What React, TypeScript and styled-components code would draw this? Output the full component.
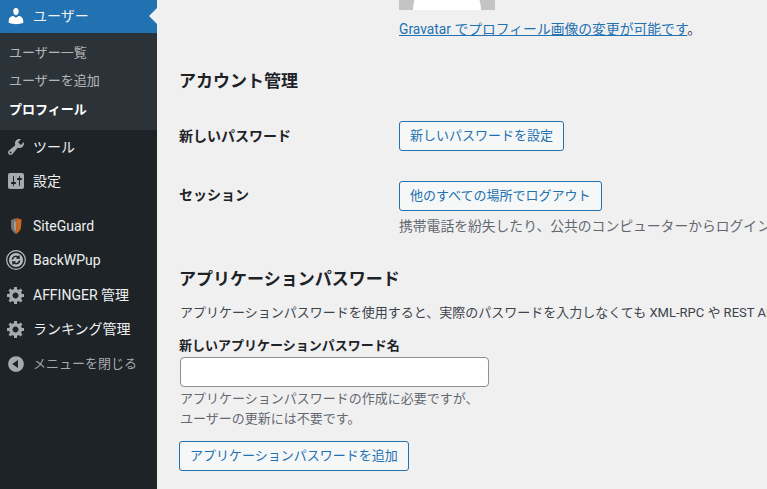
import React from "react";
import styled, { createGlobalStyle } from "styled-components";

const GlobalStyle = createGlobalStyle`
  html, body {
    margin: 0;
    padding: 0;
    height: 100%;
    overflow: hidden;
    background: #f0f0f1;
  }
  * {
    box-sizing: border-box;
  }
`;

const Page = styled.div`
  display: flex;
  width: 767px;
  height: 489px;
  overflow: hidden;
  font-family: Roboto, "Noto Sans CJK JP", sans-serif;
  font-size: 13px;
  color: #3c434a;
`;

const Sidebar = styled.nav`
  width: 157px;
  flex-shrink: 0;
  background: #1d2327;
`;

const MenuItem = styled.div<{ $current?: boolean; $muted?: boolean; $gap?: boolean }>`
  position: relative;
  display: flex;
  align-items: center;
  gap: 7px;
  height: ${(p) => (p.$current ? 33 : 34.4)}px;
  margin-top: ${(p) => (p.$gap ? 10.4 : 0)}px;
  padding-left: 6px;
  padding-bottom: ${(p) => (p.$current ? 2 : 0)}px;
  font-size: ${(p) => (p.$muted ? 13 : 14)}px;
  color: ${(p) => (p.$muted ? "#a7aaad" : "#f0f0f1")};
  background: ${(p) => (p.$current ? "#2271b1" : "transparent")};

  svg {
    flex-shrink: 0;
    fill: ${(p) => (p.$current ? "#fff" : "#a7aaad")};
  }
`;

const MenuLabel = styled.span`
  line-height: 20px;
`;

const CurrentArrow = styled.span`
  position: absolute;
  right: 0;
  top: 8px;
  border: 8px solid transparent;
  border-right-color: #f0f0f1;
  border-left-width: 0;
`;

const SubMenu = styled.div`
  height: 96.6px;
  padding-top: 5.6px;
  background: #2c3338;
`;

const SubItem = styled.div<{ $active?: boolean }>`
  height: 28.5px;
  line-height: 28px;
  padding-left: 9px;
  font-size: 13px;
  font-weight: ${(p) => (p.$active ? 700 : 400)};
  color: ${(p) => (p.$active ? "#fff" : "rgba(240, 240, 241, 0.7)")};
`;

const Content = styled.main`
  flex: 1;
  min-width: 0;
  padding-left: 22px;
`;

const ValueColumn = styled.div`
  margin-left: 220px;
`;

const Avatar = styled.div`
  position: relative;
  width: 96px;
  height: 10px;
  overflow: hidden;
  background: #c4c4c4;
`;

const AvatarBody = styled.span`
  position: absolute;
  left: 14px;
  top: -24px;
  width: 68px;
  height: 68px;
  border-radius: 50%;
  background: #fff;
`;

const GravatarNote = styled.p`
  margin: 9px 0 0;
  font-size: 13.8px;
  line-height: 20px;
  white-space: nowrap;

  a {
    color: #2271b1;
    text-decoration: underline;
  }
`;

const Heading = styled.h2<{ $top: number }>`
  margin: ${(p) => p.$top}px 0 0;
  font-size: 17px;
  line-height: 24px;
  font-weight: 700;
  color: #1d2327;
`;

const FormRow = styled.div<{ $top: number }>`
  display: grid;
  grid-template-columns: 220px 1fr;
  justify-items: start;
  margin-top: ${(p) => p.$top}px;
`;

const RowLabel = styled.div<{ $pad: number }>`
  padding-top: ${(p) => p.$pad}px;
  font-size: 14px;
  line-height: 20px;
  font-weight: 700;
  color: #1d2327;
`;

const Button = styled.button`
  display: block;
  height: 30px;
  padding: 0 10px;
  border: 1px solid #2271b1;
  border-radius: 3px;
  background: #f6f7f7;
  color: #2271b1;
  font-family: inherit;
  font-size: 13px;
  line-height: 28px;
  white-space: nowrap;
`;

const Description = styled.p`
  margin: 5px 0 0;
  font-size: 13.8px;
  line-height: 20px;
  color: #646970;
  white-space: nowrap;
`;

const Intro = styled.p`
  margin: 12px 0 0 1px;
  font-size: 13px;
  line-height: 20px;
  white-space: nowrap;
`;

const FieldLabel = styled.label`
  display: block;
  margin-top: 14px;
  font-size: 13px;
  line-height: 18px;
  font-weight: 700;
  color: #1d2327;
`;

const TextInput = styled.input`
  display: block;
  width: 309px;
  height: 30px;
  margin: 2px 0 0 1px;
  border: 1px solid #8c8f94;
  border-radius: 4px;
  background: #fff;
`;

const Hint = styled.p`
  margin: 2px 0 0 1px;
  font-size: 13px;
  line-height: 20px;
  color: #646970;
  white-space: nowrap;
`;

const AddButton = styled(Button)`
  margin-top: 12px;
`;

const Dash = ({ d }: { d: string }) => (
  <svg width="20" height="20" viewBox="0 0 20 20">
    <path d={d} />
  </svg>
);

const paths = {
  users:
    "M10 9.25c-2.27 0-2.73-3.44-2.73-3.44C7 4.02 7.82 2 9.97 2c2.16 0 2.98 2.02 2.71 3.81 0 0-.41 3.44-2.68 3.44zm0 2.57L12.72 10c2.39 0 4.52 2.33 4.52 4.53v2.49s-3.65 1.13-7.24 1.13c-3.65 0-7.24-1.13-7.24-1.13v-2.49c0-2.25 1.94-4.48 4.47-4.48z",
  tools:
    "M16.68 9.77c-1.34 1.34-3.3 1.67-4.95.99l-5.41 6.52c-.99.99-2.59.99-3.58 0s-.99-2.59 0-3.57l6.52-5.42c-.68-1.65-.35-3.61.99-4.95 1.28-1.28 3.12-1.62 4.72-1.06l-2.89 2.89 2.82 2.82 2.86-2.87c.53 1.58.18 3.39-1.08 4.65zM3.81 16.21c.4.39 1.04.39 1.43 0 .4-.4.4-1.04 0-1.43-.39-.4-1.03-.4-1.43 0-.39.39-.39 1.03 0 1.43z",
  settings:
    "M18 16V4c0-1.1-.9-2-2-2H4c-1.1 0-2 .9-2 2v12c0 1.1.9 2 2 2h12c1.1 0 2-.9 2-2zM8 11h1c.55 0 1 .45 1 1s-.45 1-1 1H8v1.5c0 .28-.22.5-.5.5s-.5-.22-.5-.5V13H6c-.55 0-1-.45-1-1s.45-1 1-1h1V5.5c0-.28.22-.5.5-.5s.5.22.5.5V11zm5-2h-1c-.55 0-1-.45-1-1s.45-1 1-1h1V5.5c0-.28.22-.5.5-.5s.5.22.5.5V7h1c.55 0 1 .45 1 1s-.45 1-1 1h-1v5.5c0 .28-.22.5-.5.5s-.5-.22-.5-.5V9z",
  generic:
    "M18 12h-2.18c-.17.7-.44 1.35-.81 1.93l1.54 1.54-2.1 2.1-1.54-1.54c-.58.36-1.23.63-1.91.79V19H8v-2.18c-.68-.16-1.33-.43-1.91-.79l-1.54 1.54-2.12-2.12 1.54-1.54c-.36-.58-.63-1.23-.79-1.91H1V9.03h2.17c.16-.7.44-1.35.8-1.94L2.43 5.55l2.1-2.1 1.54 1.54c.58-.37 1.24-.64 1.93-.81V2h3v2.18c.68.16 1.33.43 1.91.79l1.54-1.54 2.12 2.12-1.54 1.54c.36.59.64 1.24.8 1.94H18V12zm-8.5 1.5c1.66 0 3-1.34 3-3s-1.34-3-3-3-3 1.34-3 3 1.34 3 3 3z",
  collapse:
    "M10 2.16c4.33 0 7.84 3.51 7.84 7.84s-3.51 7.84-7.84 7.84S2.16 14.33 2.16 10 5.71 2.16 10 2.16zm2 11.72V6.12L6.18 9.97z",
};

const SiteGuardIcon = () => (
  <svg width="20" height="20" viewBox="0 0 20 20">
    <path d="M10.5 2 L5 4 L5 11 C5 14 7.5 16.5 10 18 Z" style={{ fill: "#77736f" }} />
    <path d="M10.5 2 L15.5 3.5 L15 11 C15 14 12.5 16.5 10 18 Z" style={{ fill: "#d2651c" }} />
    <path d="M10.5 5 L8 6 L8 12 C8 13.5 9 14.5 10 15.5 Z" style={{ fill: "#a09c98" }} />
  </svg>
);

const BackWPupIcon = () => (
  <svg width="20" height="20" viewBox="0 0 20 20">
    <circle cx="10" cy="10" r="9.3" style={{ fill: "none", stroke: "#b4c0cc", strokeWidth: 1.2 }} />
    <circle cx="10" cy="10" r="7" style={{ fill: "#b9bbbe" }} />
    <path d="M5.5 9.5 A4.5 4.5 0 0 1 12.2 6.2 L13.4 4.8 L14 9 L9.8 8.4 L11 7.3 A3 3 0 0 0 7.2 9.5 Z" style={{ fill: "#1d2327" }} />
    <path d="M14.5 10.5 A4.5 4.5 0 0 1 7.8 13.8 L6.6 15.2 L6 11 L10.2 11.6 L9 12.7 A3 3 0 0 0 12.8 10.5 Z" style={{ fill: "#1d2327" }} />
  </svg>
);

export default function App() {
  return (
    <>
      <GlobalStyle />
      <Page>
        <Sidebar>
          <MenuItem $current>
            <Dash d={paths.users} />
            <MenuLabel>ユーザー</MenuLabel>
            <CurrentArrow />
          </MenuItem>
          <SubMenu>
            <SubItem>ユーザー一覧</SubItem>
            <SubItem>ユーザーを追加</SubItem>
            <SubItem $active>プロフィール</SubItem>
          </SubMenu>
          <MenuItem>
            <Dash d={paths.tools} />
            <MenuLabel>ツール</MenuLabel>
          </MenuItem>
          <MenuItem>
            <Dash d={paths.settings} />
            <MenuLabel>設定</MenuLabel>
          </MenuItem>
          <MenuItem $gap>
            <SiteGuardIcon />
            <MenuLabel>SiteGuard</MenuLabel>
          </MenuItem>
          <MenuItem>
            <BackWPupIcon />
            <MenuLabel>BackWPup</MenuLabel>
          </MenuItem>
          <MenuItem>
            <Dash d={paths.generic} />
            <MenuLabel>AFFINGER 管理</MenuLabel>
          </MenuItem>
          <MenuItem>
            <Dash d={paths.generic} />
            <MenuLabel>ランキング管理</MenuLabel>
          </MenuItem>
          <MenuItem $muted>
            <Dash d={paths.collapse} />
            <MenuLabel>メニューを閉じる</MenuLabel>
          </MenuItem>
        </Sidebar>
        <Content>
          <ValueColumn>
            <Avatar>
              <AvatarBody />
            </Avatar>
            <GravatarNote>
              <a href="#gravatar">Gravatar でプロフィール画像の変更が可能です</a>。
            </GravatarNote>
          </ValueColumn>
          <Heading $top={30}>アカウント管理</Heading>
          <FormRow $top={28}>
            <RowLabel $pad={5}>新しいパスワード</RowLabel>
            <Button>新しいパスワードを設定</Button>
          </FormRow>
          <FormRow $top={30}>
            <RowLabel $pad={4}>セッション</RowLabel>
            <div>
              <Button>他のすべての場所でログアウト</Button>
              <Description>携帯電話を紛失したり、公共のコンピューターからログインしたままにした場合</Description>
            </div>
          </FormRow>
          <Heading $top={31}>アプリケーションパスワード</Heading>
          <Intro>アプリケーションパスワードを使用すると、実際のパスワードを入力しなくても XML-RPC や REST API</Intro>
          <FieldLabel>新しいアプリケーションパスワード名</FieldLabel>
          <TextInput type="text" />
          <Hint>
            アプリケーションパスワードの作成に必要ですが、
            <br />
            ユーザーの更新には不要です。
          </Hint>
          <AddButton>アプリケーションパスワードを追加</AddButton>
        </Content>
      </Page>
    </>
  );
}
